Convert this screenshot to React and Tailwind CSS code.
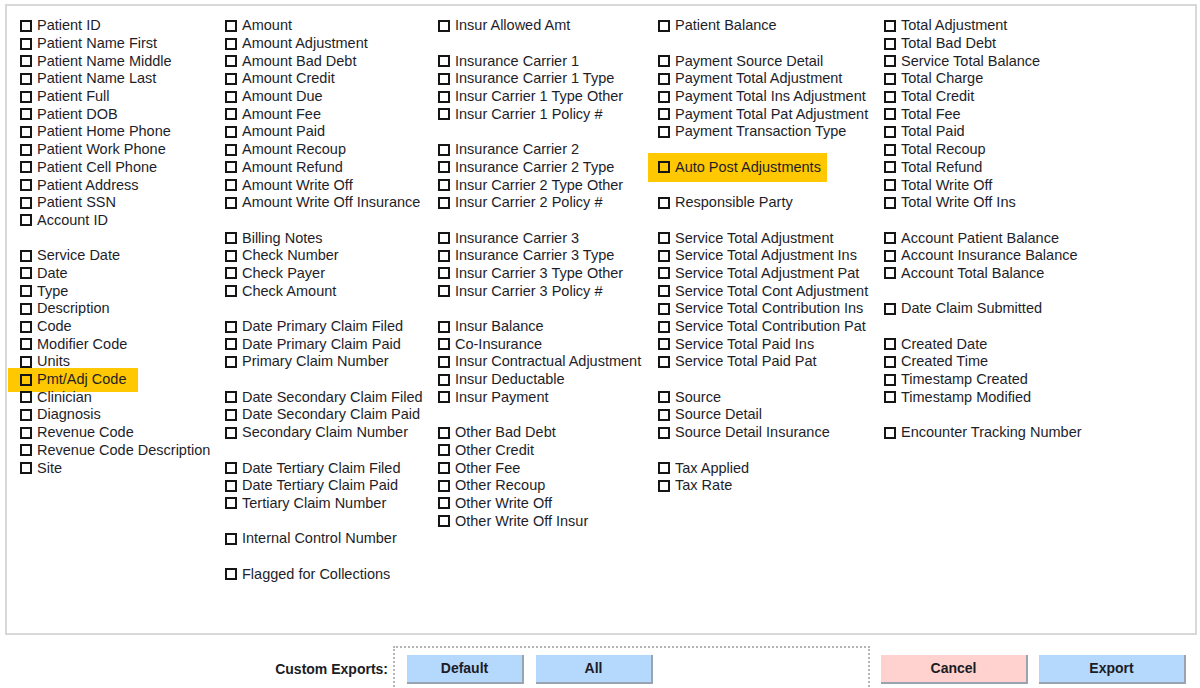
import React from "react";

const cols = [
  [
    "Patient ID", "Patient Name First", "Patient Name Middle", "Patient Name Last", "Patient Full", "Patient DOB",
    "Patient Home Phone", "Patient Work Phone", "Patient Cell Phone", "Patient Address", "Patient SSN", "Account ID", "",
    "Service Date", "Date", "Type", "Description", "Code", "Modifier Code", "Units", "*Pmt/Adj Code", "Clinician",
    "Diagnosis", "Revenue Code", "Revenue Code Description", "Site",
  ],
  [
    "Amount", "Amount Adjustment", "Amount Bad Debt", "Amount Credit", "Amount Due", "Amount Fee", "Amount Paid",
    "Amount Recoup", "Amount Refund", "Amount Write Off", "Amount Write Off Insurance", "", "Billing Notes",
    "Check Number", "Check Payer", "Check Amount", "", "Date Primary Claim Filed", "Date Primary Claim Paid",
    "Primary Claim Number", "", "Date Secondary Claim Filed", "Date Secondary Claim Paid", "Secondary Claim Number", "",
    "Date Tertiary Claim Filed", "Date Tertiary Claim Paid", "Tertiary Claim Number", "", "Internal Control Number", "",
    "Flagged for Collections",
  ],
  [
    "Insur Allowed Amt", "", "Insurance Carrier 1", "Insurance Carrier 1 Type", "Insur Carrier 1 Type Other",
    "Insur Carrier 1 Policy #", "", "Insurance Carrier 2", "Insurance Carrier 2 Type", "Insur Carrier 2 Type Other",
    "Insur Carrier 2 Policy #", "", "Insurance Carrier 3", "Insurance Carrier 3 Type", "Insur Carrier 3 Type Other",
    "Insur Carrier 3 Policy #", "", "Insur Balance", "Co-Insurance", "Insur Contractual Adjustment", "Insur Deductable",
    "Insur Payment", "", "Other Bad Debt", "Other Credit", "Other Fee", "Other Recoup", "Other Write Off",
    "Other Write Off Insur",
  ],
  [
    "Patient Balance", "", "Payment Source Detail", "Payment Total Adjustment", "Payment Total Ins Adjustment",
    "Payment Total Pat Adjustment", "Payment Transaction Type", "", "#Auto Post Adjustments", "", "Responsible Party", "",
    "Service Total Adjustment", "Service Total Adjustment Ins", "Service Total Adjustment Pat",
    "Service Total Cont Adjustment", "Service Total Contribution Ins", "Service Total Contribution Pat",
    "Service Total Paid Ins", "Service Total Paid Pat", "", "Source", "Source Detail", "Source Detail Insurance", "",
    "Tax Applied", "Tax Rate",
  ],
  [
    "Total Adjustment", "Total Bad Debt", "Service Total Balance", "Total Charge", "Total Credit", "Total Fee",
    "Total Paid", "Total Recoup", "Total Refund", "Total Write Off", "Total Write Off Ins", "", "Account Patient Balance",
    "Account Insurance Balance", "Account Total Balance", "", "Date Claim Submitted", "", "Created Date", "Created Time",
    "Timestamp Created", "Timestamp Modified", "", "Encounter Tracking Number",
  ],
];

function Row({ label }) {
  if (!label) return <div className="h-[17.7px]" />;
  let text = label;
  let hl = null;
  if (label.startsWith("*")) {
    text = label.slice(1);
    hl = <span className="absolute left-[-12px] w-[130px] top-[-3px] h-[24px] bg-[#ffc800]" />;
  } else if (label.startsWith("#")) {
    text = label.slice(1);
    hl = <span className="absolute left-[-10px] w-[179px] top-[-6px] h-[29px] bg-[#ffc800]" />;
  }
  return (
    <div className="relative h-[17.7px] flex items-center">
      {hl}
      <span className="relative w-[12px] h-[12px] border-2 border-[#151515] bg-transparent shrink-0" />
      <span className="relative ml-[5px] whitespace-nowrap text-[14.5px] leading-[17px] text-[#1e1e2a]">
        {text}
      </span>
    </div>
  );
}

function Btn({ children, color, w }) {
  return (
    <div
      className={`h-[29px] ${w} ${color} flex items-center justify-center text-[14px] font-bold text-[#1c1c24] border-r-2 border-b-2 border-[#9aa3b0]`}
    >
      {children}
    </div>
  );
}

export default function App() {
  return (
    <div className="w-[1200px] h-[688px] bg-white overflow-hidden" style={{ fontFamily: '"Liberation Sans", Arial, sans-serif' }}>
      <div className="ml-[5px] mt-[4px] w-[1192px] h-[631px] border-2 border-[#d8d8d8] pt-[11px] pl-[13px]">
        <div className="grid grid-cols-[205px_213px_220px_226px_1fr]">
          {cols.map((c, i) => (
            <div key={i} className="flex flex-col">
              {c.map((l, j) => (
                <Row key={j} label={l} />
              ))}
            </div>
          ))}
        </div>
      </div>
      <div className="flex items-start mt-[11px]">
        <div className="w-[393px] pr-[5px] pt-[13px] text-right text-[14px] leading-[20px] font-bold text-[#1c1c24]">
          Custom Exports:
        </div>
        <div className="w-[477px] h-[60px] border-l-2 border-t-2 border-r-2 border-dotted border-[#b5b5b5] pl-[12px] pt-[7px] flex gap-[12px]">
          <Btn color="bg-[#b5d8fd]" w="w-[117px]">Default</Btn>
          <Btn color="bg-[#b5d8fd]" w="w-[117px]">All</Btn>
        </div>
        <div className="ml-[11px] pt-[9px] flex gap-[11px]">
          <Btn color="bg-[#ffd2cf]" w="w-[147px]">Cancel</Btn>
          <Btn color="bg-[#b5d8fd]" w="w-[147px]">Export</Btn>
        </div>
      </div>
    </div>
  );
}
